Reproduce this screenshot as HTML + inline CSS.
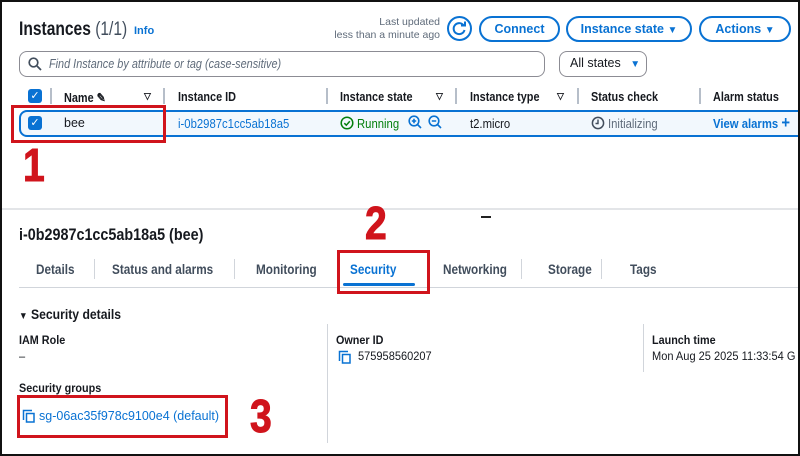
<!DOCTYPE html>
<html><head><meta charset="utf-8"><style>
*{margin:0;padding:0;box-sizing:border-box}
body{width:800px;height:456px;overflow:hidden;background:#fff;font-family:"Liberation Sans",sans-serif;color:#16191f;position:relative}
.a{position:absolute;white-space:nowrap}
.c{transform:scaleX(.87);transform-origin:left}
.btn{position:absolute;border:2px solid #0972d3;border-radius:14px;color:#0972d3;font-weight:bold;font-size:12.5px;text-align:center;line-height:22px;height:26px}
.h{font-size:12.5px;font-weight:bold;color:#16191f;transform:scaleX(.87);transform-origin:left}
.sep{position:absolute;width:2px;background:#b6bec9}
.red{position:absolute;border:3px solid #d0141c}
.num{position:absolute;color:#d0141c;font-weight:bold;font-size:46px;line-height:40px;transform:scaleX(.85);transform-origin:left;-webkit-text-stroke:1px #d0141c}
.tab{position:absolute;top:262px;font-size:13.5px;color:#414d5c;font-weight:bold;transform:scaleX(.87);transform-origin:left;white-space:nowrap}
.tsep{position:absolute;top:259px;height:20px;width:1px;background:#d1d5db}
.lbl{font-size:12px;font-weight:bold;transform:scaleX(.9);transform-origin:left}
.val{font-size:12px;transform:scaleX(.92);transform-origin:left}
.blue{color:#0972d3}
.tri{font-size:9px;font-weight:bold}
</style></head><body>
<div style="position:absolute;inset:0;border:2px solid #111;z-index:10;pointer-events:none"></div>

<div class="a" style="left:19px;top:19px;font-size:19px;font-weight:bold;transform:scaleX(.82);transform-origin:left">Instances <span style="font-weight:normal;color:#414d5c">(1/1)</span></div>
<div class="a blue" style="left:134px;top:25px;font-size:11px;font-weight:bold">Info</div>
<div class="a" style="left:330px;top:16px;width:110px;text-align:right;font-size:10.5px;color:#5f6b7a;line-height:13px">Last updated<br>less than a minute ago</div>
<div style="position:absolute;left:447px;top:16px;width:25px;height:25px;border:2px solid #0972d3;border-radius:50%"></div>
<svg class="a" style="left:452px;top:21px" width="15" height="15" viewBox="0 0 15 15"><path d="M12 5A5.5 5.5 0 1 0 12.5 9" fill="none" stroke="#0972d3" stroke-width="2"/><path d="M9 4.5h4v-4" fill="none" stroke="#0972d3" stroke-width="2"/></svg>
<div class="btn" style="left:479px;top:16px;width:81px">Connect</div>
<div class="btn" style="left:566px;top:16px;width:126px">Instance state <span style="font-size:10px">&#9660;</span></div>
<div class="btn" style="left:699px;top:16px;width:92px">Actions <span style="font-size:10px">&#9660;</span></div>

<div style="position:absolute;left:19px;top:51px;width:526px;height:26px;border:1.5px solid #8c8c94;border-radius:8px"></div>
<svg class="a" style="left:28px;top:57px" width="14" height="14"><circle cx="5.5" cy="5.5" r="4.3" fill="none" stroke="#414d5c" stroke-width="1.7"/><path d="M9 9l4 4" stroke="#414d5c" stroke-width="1.8"/></svg>
<div class="a c" style="left:49px;top:57px;font-size:12.5px;font-style:italic;color:#5f6b7a">Find Instance by attribute or tag (case-sensitive)</div>
<div style="position:absolute;left:559px;top:51px;width:88px;height:26px;border:1.5px solid #8c8c94;border-radius:8px;font-size:12.5px;line-height:23px;padding-left:10px">All states <span class="blue" style="font-size:10px;margin-left:6px">&#9660;</span></div>

<div style="position:absolute;left:28px;top:89px;width:14px;height:14px;background:#0972d3;border-radius:3px;color:#fff;font-size:11px;text-align:center;line-height:14px">&#10003;</div>
<div class="sep" style="left:50px;top:88px;height:16px"></div>
<div class="a h" style="left:64px;top:90px">Name &#9998;</div>
<div class="a tri" style="left:144px;top:91px">&#9661;</div>
<div class="sep" style="left:163px;top:88px;height:16px"></div>
<div class="a h" style="left:178px;top:90px">Instance ID</div>
<div class="sep" style="left:326px;top:88px;height:16px"></div>
<div class="a h" style="left:340px;top:90px">Instance state</div>
<div class="a tri" style="left:436px;top:91px">&#9661;</div>
<div class="sep" style="left:455px;top:88px;height:16px"></div>
<div class="a h" style="left:470px;top:90px">Instance type</div>
<div class="a tri" style="left:557px;top:91px">&#9661;</div>
<div class="sep" style="left:577px;top:88px;height:16px"></div>
<div class="a h" style="left:591px;top:90px">Status check</div>
<div class="sep" style="left:699px;top:88px;height:16px"></div>
<div class="a h" style="left:713px;top:90px">Alarm status</div>

<div style="position:absolute;left:19px;top:110px;width:790px;height:27px;background:#f2f8fd;border:2px solid #0972d3;border-radius:8px"></div>
<div style="position:absolute;left:28px;top:116px;width:14px;height:14px;background:#0972d3;border-radius:3px;color:#fff;font-size:11px;text-align:center;line-height:14px">&#10003;</div>
<div class="a" style="left:64px;top:116px;font-size:12.5px">bee</div>
<div class="a blue c" style="left:178px;top:116px;font-size:13px">i-0b2987c1cc5ab18a5</div>
<svg class="a" style="left:340px;top:116px" width="14" height="14"><circle cx="7" cy="7" r="5.8" fill="none" stroke="#037f0c" stroke-width="1.5"/><path d="M4.3 7.2l2 2 3.5-4" fill="none" stroke="#037f0c" stroke-width="1.5"/></svg>
<div class="a c" style="left:357px;top:116px;font-size:13px;color:#037f0c">Running</div>
<svg class="a" style="left:408px;top:115px" width="36" height="15"><circle cx="6" cy="6" r="4.8" fill="none" stroke="#0972d3" stroke-width="1.6"/><path d="M9.5 9.5l3.5 3.5M3.8 6h4.4M6 3.8v4.4" stroke="#0972d3" stroke-width="1.6"/><circle cx="26" cy="6" r="4.8" fill="none" stroke="#0972d3" stroke-width="1.6"/><path d="M29.5 9.5l3.5 3.5M23.8 6h4.4" stroke="#0972d3" stroke-width="1.6"/></svg>
<div class="a c" style="left:470px;top:116px;font-size:13px">t2.micro</div>
<svg class="a" style="left:591px;top:116px" width="14" height="14"><circle cx="7" cy="7" r="5.6" fill="none" stroke="#414d5c" stroke-width="1.5"/><path d="M7 3.5V7.5H4.5" fill="none" stroke="#414d5c" stroke-width="1.4"/></svg>
<div class="a c" style="left:608px;top:116px;font-size:13px;color:#5f6b7a">Initializing</div>
<div class="a blue c" style="left:713px;top:116px;font-size:13px;font-weight:bold">View alarms <span style="font-size:17px;line-height:12px">+</span></div>

<div class="red" style="left:11px;top:105px;width:155px;height:38px"></div>
<div class="num" style="left:23px;top:145px">1</div>

<div style="position:absolute;left:2px;top:208px;width:796px;height:2px;background:#e3e5e8"></div>
<div style="position:absolute;left:481px;top:216px;width:10px;height:2px;background:#222"></div>
<div class="num" style="left:365px;top:203px">2</div>

<div class="a c" style="left:19px;top:226px;font-size:16.5px;font-weight:bold">i-0b2987c1cc5ab18a5 (bee)</div>

<div class="tab" style="left:36px">Details</div>
<div class="tsep" style="left:94px"></div>
<div class="tab" style="left:112px">Status and alarms</div>
<div class="tsep" style="left:234px"></div>
<div class="tab" style="left:256px">Monitoring</div>
<div class="tab" style="left:350px;color:#0972d3">Security</div>
<div class="tab" style="left:443px">Networking</div>
<div class="tsep" style="left:521px"></div>
<div class="tab" style="left:548px">Storage</div>
<div class="tsep" style="left:601px"></div>
<div class="tab" style="left:630px">Tags</div>
<div style="position:absolute;left:19px;top:287px;width:781px;height:1px;background:#d1d5db"></div>
<div style="position:absolute;left:343px;top:283px;width:72px;height:3px;background:#0972d3;border-radius:2px"></div>
<div class="red" style="left:337px;top:250px;width:93px;height:44px"></div>

<div class="a c" style="left:19px;top:306px;font-size:14px;font-weight:bold"><span style="font-size:10px">&#9660;</span> Security details</div>
<div style="position:absolute;left:327px;top:324px;width:1px;height:119px;background:#d1d5db"></div>
<div style="position:absolute;left:643px;top:324px;width:1px;height:48px;background:#d1d5db"></div>

<div class="a lbl" style="left:19px;top:333px">IAM Role</div>
<div class="a val" style="left:19px;top:349px">–</div>
<div class="a lbl" style="left:336px;top:333px">Owner ID</div>
<svg class="a" style="left:338px;top:350px" width="13" height="14"><path d="M1.5 11V1.5H10" fill="none" stroke="#0972d3" stroke-width="1.5"/><rect x="4.5" y="4.5" width="7.5" height="8.5" fill="none" stroke="#0972d3" stroke-width="1.5"/></svg>
<div class="a val" style="left:358px;top:349px">575958560207</div>
<div class="a lbl" style="left:652px;top:333px">Launch time</div>
<div class="a val" style="left:652px;top:349px">Mon Aug 25 2025 11:33:54 G</div>

<div class="a lbl" style="left:19px;top:381px">Security groups</div>
<svg class="a" style="left:22px;top:409px" width="13" height="14"><path d="M1.5 11V1.5H10" fill="none" stroke="#0972d3" stroke-width="1.5"/><rect x="4.5" y="4.5" width="7.5" height="8.5" fill="none" stroke="#0972d3" stroke-width="1.5"/></svg>
<div class="a blue" style="left:39px;top:409px;font-size:12.5px">sg-06ac35f978c9100e4 (default)</div>
<div class="red" style="left:17px;top:395px;width:211px;height:43px"></div>
<div class="num" style="left:250px;top:396px">3</div>
</body></html>
